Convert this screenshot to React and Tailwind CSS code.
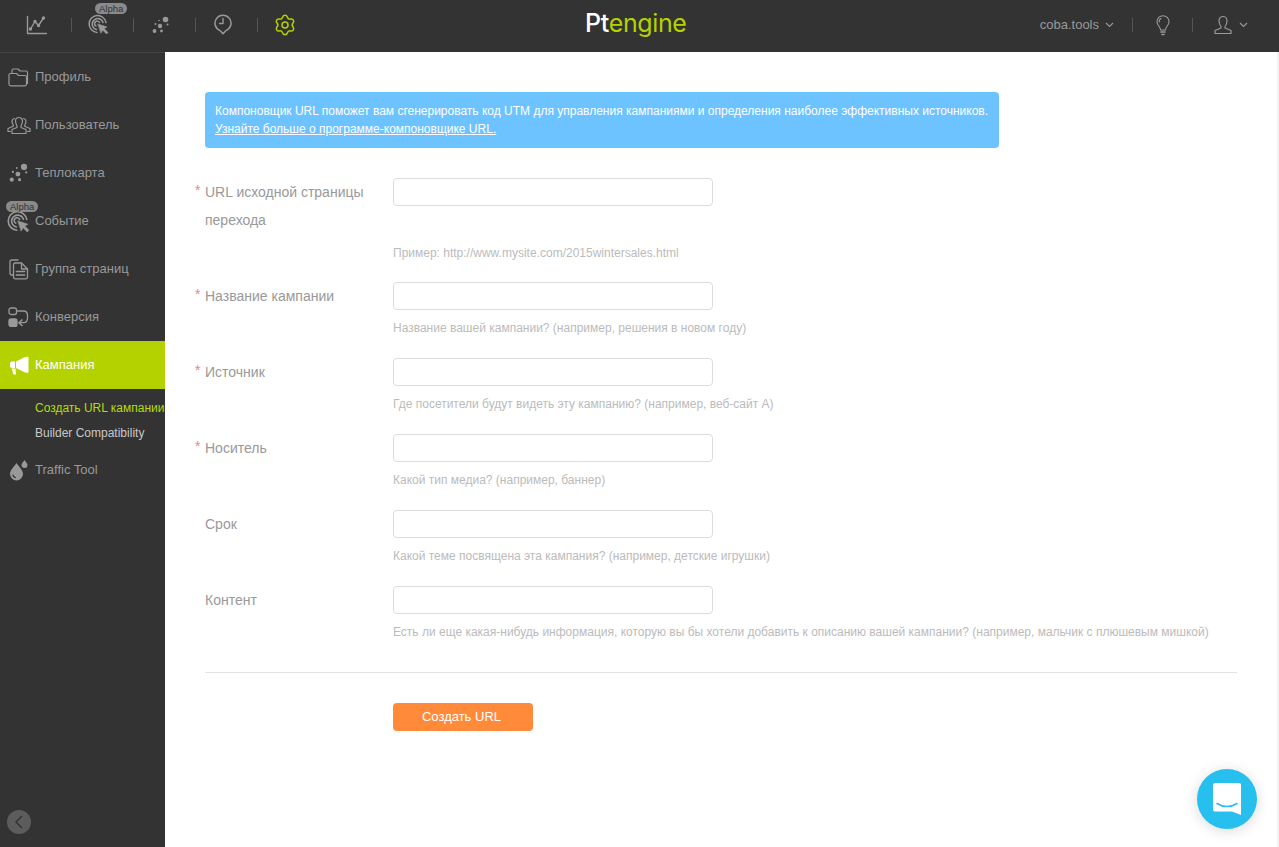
import React from "react";

const stroke = { fill: "none", stroke: "currentColor", strokeWidth: 1.4, strokeLinecap: "round", strokeLinejoin: "round" };

const ChartIcon = () => (
  <svg width="22" height="20" viewBox="0 0 22 20" {...stroke}>
    <path d="M1.5 1.5V18.5H20.5" />
    <path d="M4.5 14L9 6.5L12.5 10.5L17.5 3" />
    <circle cx="4.5" cy="14" r="1" fill="currentColor" />
    <circle cx="9" cy="6.5" r="1" fill="currentColor" />
    <circle cx="12.5" cy="10.5" r="1" fill="currentColor" />
    <circle cx="17.5" cy="3" r="1" fill="currentColor" />
  </svg>
);

const TargetIcon = ({ size = 21 }) => (
  <svg width={size} height={size} viewBox="0 0 21 21" {...stroke}>
    <path d="M9 18.5A8.5 8.5 0 1 1 18 8.5" strokeWidth="1.5" />
    <path d="M8.5 15.5A5.5 5.5 0 1 1 15 8.5" strokeWidth="1.5" />
    <path d="M8 12A2.6 2.6 0 1 1 11.5 8.5" strokeWidth="1.5" />
    <path d="M10 10L19 13L16.2 14.6L20 18.5L18.5 20L14.7 16.2L13 19Z" fill="currentColor" strokeWidth="0.6" />
  </svg>
);

const DotsIcon = ({ size = 18 }) => (
  <svg width={size} height={size} viewBox="0 0 18 18" fill="currentColor">
    <circle cx="13.5" cy="3.5" r="2.8" />
    <circle cx="8" cy="10" r="2.2" />
    <circle cx="2.5" cy="15" r="1.9" />
    <circle cx="9.5" cy="15" r="1.4" />
    <circle cx="3.5" cy="8" r="1" />
    <circle cx="15.5" cy="8.5" r="1" />
    <circle cx="7" cy="4.5" r="0.8" />
  </svg>
);

const ClockIcon = () => (
  <svg width="18" height="21" viewBox="0 0 18 21" {...stroke}>
    <path d="M9 19.8L6 16.6A8 8 0 1 1 12 16.6Z" strokeWidth="1.5" />
    <path d="M9 4.5V9.5H5.5" />
  </svg>
);

const GearIcon = () => (
  <svg width="18" height="20" viewBox="0 0 18 20" fill="none" stroke="currentColor" strokeWidth="1.5" strokeLinejoin="round" className="overflow-visible">
    <path d="M6.71 2.02A2.4 2.4 0 0 1 11.29 2.02Q12.1 4.63 14.77 4.03A2.4 2.4 0 0 1 17.05 7.99Q15.2 10 17.05 12.01A2.4 2.4 0 0 1 14.77 15.97Q12.1 15.37 11.29 17.98A2.4 2.4 0 0 1 6.71 17.98Q5.9 15.37 3.23 15.97A2.4 2.4 0 0 1 0.95 12.01Q2.8 10 0.95 7.99A2.4 2.4 0 0 1 3.23 4.03Q5.9 4.63 6.71 2.02Z" />
    <circle cx="9" cy="10" r="3" />
  </svg>
);

const BulbIcon = () => (
  <svg width="16" height="21" viewBox="0 0 16 21" {...stroke} strokeWidth="1.1">
    <path d="M5.5 15C5.5 11.5 2 10.5 2 6.7A6 6 0 0 1 14 6.7C14 10.5 10.5 11.5 10.5 15Z" />
    <path d="M6 3.5C4.5 4.2 4 5.5 4.2 7" />
    <path d="M6 17H10" strokeWidth="1.6" />
    <path d="M7 19.5H9" strokeWidth="1.6" />
  </svg>
);

const UserIcon = () => (
  <svg width="20" height="20" viewBox="0 0 20 20" {...stroke} strokeWidth="1.2">
    <path d="M6 5.5A4 4 0 0 1 14 5.5C14 8.5 12.8 10.5 12 11.5V13L18 15.5V18.5H2V15.5L8 13V11.5C7.2 10.5 6 8.5 6 5.5Z" />
  </svg>
);

const Chevron = () => (
  <svg width="9" height="6" viewBox="0 0 9 6" fill="none" stroke="currentColor" strokeWidth="1.1">
    <path d="M1 1L4.5 4.5L8 1" />
  </svg>
);

const FolderIcon = () => (
  <svg width="22" height="19" viewBox="0 0 22 19" {...stroke} strokeWidth="1.2">
    <path d="M4 5V2.5C4 1.7 4.6 1 5.5 1H10L12 3H18C18.8 3 19.5 3.7 19.5 4.5V15.5" />
    <path d="M1 7C1 6 1.7 5.5 2.5 5.5H8.5L10.5 7.5H17C18 7.5 18.5 8.2 18.5 9V16C18.5 17 17.8 17.8 17 17.8H2.5C1.7 17.8 1 17 1 16Z" />
  </svg>
);

const PeopleIcon = () => (
  <svg width="24" height="19" viewBox="0 0 24 19" {...stroke} strokeWidth="1.2">
    <path d="M8.5 5A3.5 3.5 0 0 1 15.5 5C15.5 7.5 14.5 9 14 10V11.5L19 13.5V17.5H5V13.5L10 11.5V10C9.5 9 8.5 7.5 8.5 5Z" />
    <path d="M7.5 2.5C5.8 2.8 5 4 5 5.5C5 7 5.7 8.2 6.3 9V10.2L1 12.5V15.5H3.5" />
    <path d="M16.5 2.5C18.2 2.8 19 4 19 5.5C19 7 18.3 8.2 17.7 9V10.2L23 12.5V15.5H20.5" />
  </svg>
);

const PagesIcon = () => (
  <svg width="20" height="21" viewBox="0 0 20 21" {...stroke} strokeWidth="1.3">
    <path d="M4 16H2.5C1.7 16 1 15.3 1 14.5V2.5C1 1.7 1.7 1 2.5 1H9" />
    <path d="M4.5 6C4.5 5 5.2 4 6.3 4H12.5L18.5 10V18C18.5 19 17.8 19.8 16.8 19.8H6.3C5.2 19.8 4.5 19 4.5 18Z" />
    <path d="M12.5 4V10H18.5" />
    <path d="M7.5 12.5H15.5M7.5 16H15.5" strokeWidth="1.7" />
  </svg>
);

const ConversionIcon = () => (
  <svg width="21" height="20" viewBox="0 0 21 20" fill="none" stroke="currentColor" strokeWidth="1.3">
    <rect x="1" y="1" width="7.5" height="6.5" rx="2" />
    <rect x="1" y="12" width="8" height="7.5" rx="2" fill="currentColor" />
    <path d="M8.5 4H15.5C18 4 19.5 5.7 19.5 8.5V11C19.5 14 18 15.7 15.5 15.7H12" />
    <path d="M14.5 12.5L11 15.7L14.5 19" strokeWidth="1.5" />
  </svg>
);

const MegaphoneIcon = () => (
  <svg width="20" height="19" viewBox="0 0 20 19" fill="currentColor">
    <path d="M7 5.5L15 1.5C16 1 19 0.5 19.5 1V16.5C19 17 16 16.5 15 16L7 12Z" />
    <path d="M1 7.5C1 6.3 2 5.5 3 5.5H6V12H3C2 12 1 11.2 1 10Z" />
    <path d="M2.5 12.5H6.5L7 18.5H4.5Z" />
  </svg>
);

const DropIcon = () => (
  <svg width="22" height="22" viewBox="0 0 22 22" fill="currentColor">
    <path d="M8.5 4C10.5 7.5 15 10.5 15 15A6.5 6.5 0 0 1 2 15C2 10.5 6.5 7.5 8.5 4Z" />
    <path d="M16.5 1C17.5 3 19.5 4 19.5 6A3 3 0 0 1 13.5 6C13.5 4 15.5 3 16.5 1Z" />
    <path d="M5 15.5C5 17.5 6.5 18.5 8 18.7" fill="none" stroke="#333" strokeWidth="1.1" />
  </svg>
);

const AlphaBadge = ({ className }) => (
  <span className={`absolute rounded-full bg-[#8a8a8a] px-[4px] text-[9.5px] leading-[11px] text-[#333] ${className}`}>
    Alpha
  </span>
);

const Sep = () => <span className="block h-[14px] w-px bg-[#555]" />;

const topIcons = [
  { icon: <ChartIcon /> },
  { icon: <TargetIcon />, alpha: true },
  { icon: <DotsIcon /> },
  { icon: <ClockIcon /> },
];

const sideItems = [
  { label: "Профиль", icon: <FolderIcon /> },
  { label: "Пользователь", icon: <PeopleIcon /> },
  { label: "Теплокарта", icon: <DotsIcon size={20} /> },
  { label: "Событие", icon: <TargetIcon size={23} />, alpha: true },
  { label: "Группа страниц", icon: <PagesIcon /> },
  { label: "Конверсия", icon: <ConversionIcon /> },
];

const fields = [
  {
    label: "URL исходной страницы перехода",
    required: true,
    hint: "Пример: http://www.mysite.com/2015wintersales.html",
    first: true,
  },
  { label: "Название кампании", required: true, hint: "Название вашей кампании? (например, решения в новом году)" },
  { label: "Источник", required: true, hint: "Где посетители будут видеть эту кампанию? (например, веб-сайт А)" },
  { label: "Носитель", required: true, hint: "Какой тип медиа? (например, баннер)" },
  { label: "Срок", hint: "Какой теме посвящена эта кампания? (например, детские игрушки)" },
  {
    label: "Контент",
    hint: "Есть ли еще какая-нибудь информация, которую вы бы хотели добавить к описанию вашей кампании? (например, мальчик с плюшевым мишкой)",
  },
];

const SideItem = ({ item }) => (
  <div className="relative flex h-12 items-center text-[13px] text-[#999]">
    <span className="flex w-[35px] shrink-0 items-center justify-center pl-[2px] text-[#999]">{item.icon}</span>
    <span>{item.label}</span>
    {item.alpha && <AlphaBadge className="left-[6px] top-[4px]" />}
  </div>
);

const App = () => {
  return (
    <div className="flex h-screen flex-col overflow-hidden bg-white font-['Liberation_Sans',Arial,sans-serif]">
      <header className="flex h-[52px] shrink-0 items-center bg-[#333] text-[#999]">
        <nav className="flex w-[400px] items-center pb-[3px] pl-[10px]">
          {topIcons.map((t, i) => (
            <React.Fragment key={i}>
              <div className="relative flex h-[49px] w-[61px] items-center justify-center pr-[8px]">
                {t.icon}
                {t.alpha && <AlphaBadge className="left-[23px] top-[3px]" />}
              </div>
              <Sep />
            </React.Fragment>
          ))}
          <div className="flex h-[49px] w-[61px] items-center justify-center pr-[8px] text-[#b4d200]">
            <GearIcon />
          </div>
        </nav>
        <div className="mb-[6px] flex-1 pl-[185px] font-['Inter',sans-serif] text-[25px] leading-[46px] tracking-[-0.4px]">
          <span className="font-medium text-white">Pt</span>
          <span className="text-[#b4d200]">engine</span>
        </div>
        <div className="flex items-center pr-[31px] pb-[2px] text-[13px]">
          <span>coba.tools</span>
          <span className="ml-[6px]"><Chevron /></span>
          <span className="ml-[18px]"><Sep /></span>
          <span className="ml-[22px] flex"><BulbIcon /></span>
          <span className="ml-[21px]"><Sep /></span>
          <span className="ml-[20px] flex"><UserIcon /></span>
          <span className="ml-[6px]"><Chevron /></span>
        </div>
      </header>

      <div className="flex min-h-0 flex-1">
        <aside className="flex w-[165px] shrink-0 flex-col overflow-hidden border-t border-[#444] bg-[#333]">
          {sideItems.map((item) => (
            <SideItem key={item.label} item={item} />
          ))}
          <div className="flex h-12 items-center bg-[#b4d200] text-[13px] text-white">
            <span className="flex w-[35px] shrink-0 items-center justify-center pl-[2px]">
              <MegaphoneIcon />
            </span>
            <span>Кампания</span>
          </div>
          <div className="whitespace-nowrap pt-[7px] pl-[35px] text-[12px] leading-[25px]">
            <div className="text-[#b4dc0a]">Создать URL кампании</div>
            <div className="text-[#c8c8c8]">Builder Compatibility</div>
          </div>
          <SideItem item={{ label: "Traffic Tool", icon: <DropIcon /> }} />
          <div className="mt-auto mb-[13px] ml-[7px] flex h-6 w-6 items-center justify-center rounded-full bg-[#5c5c5c] text-[#333]">
            <svg width="10" height="14" viewBox="0 0 10 14" fill="none" stroke="currentColor" strokeWidth="1.5">
              <path d="M8 1L2 7L8 13" />
            </svg>
          </div>
        </aside>

        <main className="min-w-0 flex-1 border-r-2 border-[#f2f2f2] pt-10 pr-10 pl-10 text-[14px]">
          <div className="w-[794px] rounded-[4px] bg-[#6cc3ff] px-[10px] py-[10px] text-[12px] leading-[18px] text-white">
            <div>
              Компоновщик URL поможет вам сгенерировать код UTM для управления кампаниями и определения наиболее эффективных источников.
            </div>
            <a className="underline">Узнайте больше о программе-компоновщике URL.</a>
          </div>

          <form className="mt-[30px]">
            {fields.map((f) => (
              <div key={f.label} className={f.first ? "mb-[15px]" : "mb-4"}>
                <div className="flex">
                  <label className="relative w-[188px] shrink-0 pr-6 leading-[28px] text-[#999]">
                    {f.required && <span className="absolute top-[-2px] left-[-10px] text-[#ff7b7b]">*</span>}
                    {f.label}
                  </label>
                  <input className="h-7 w-80 rounded-[4px] border border-[#dcdcdc] bg-white" />
                </div>
                <div className={`ml-[188px] text-[12px] leading-7 text-[#bbb] ${f.first ? "mt-[5px]" : "mt-1"}`}>
                  {f.hint}
                </div>
              </div>
            ))}
            <div className="mt-[26px] border-t border-[#e2e2e2]" />
            <button
              type="button"
              className="mt-[30px] ml-[188px] h-7 w-[140px] rounded-[4px] bg-[#ff8a3a] pr-[3px] text-[13px] text-white"
            >
              Создать URL
            </button>
          </form>
        </main>
      </div>

      <div className="absolute top-[769px] left-[1197px] flex h-[60px] w-[60px] items-center justify-center rounded-full bg-[#27c0ee] shadow-[0_2px_14px_rgba(0,0,0,0.15)]">
        <svg width="28" height="32" viewBox="0 0 28 32" fill="none">
          <path d="M2 0H26C27.2 0 28 0.8 28 2V32L19 28.5H2C0.8 28.5 0 27.7 0 26.5V2C0 0.8 0.8 0 2 0Z" fill="#fff" />
          <path d="M4 20.5C10 24.5 18 24.5 24 20.5" stroke="#27c0ee" strokeWidth="1.6" strokeLinecap="round" />
        </svg>
      </div>
    </div>
  );
};

export default App;
